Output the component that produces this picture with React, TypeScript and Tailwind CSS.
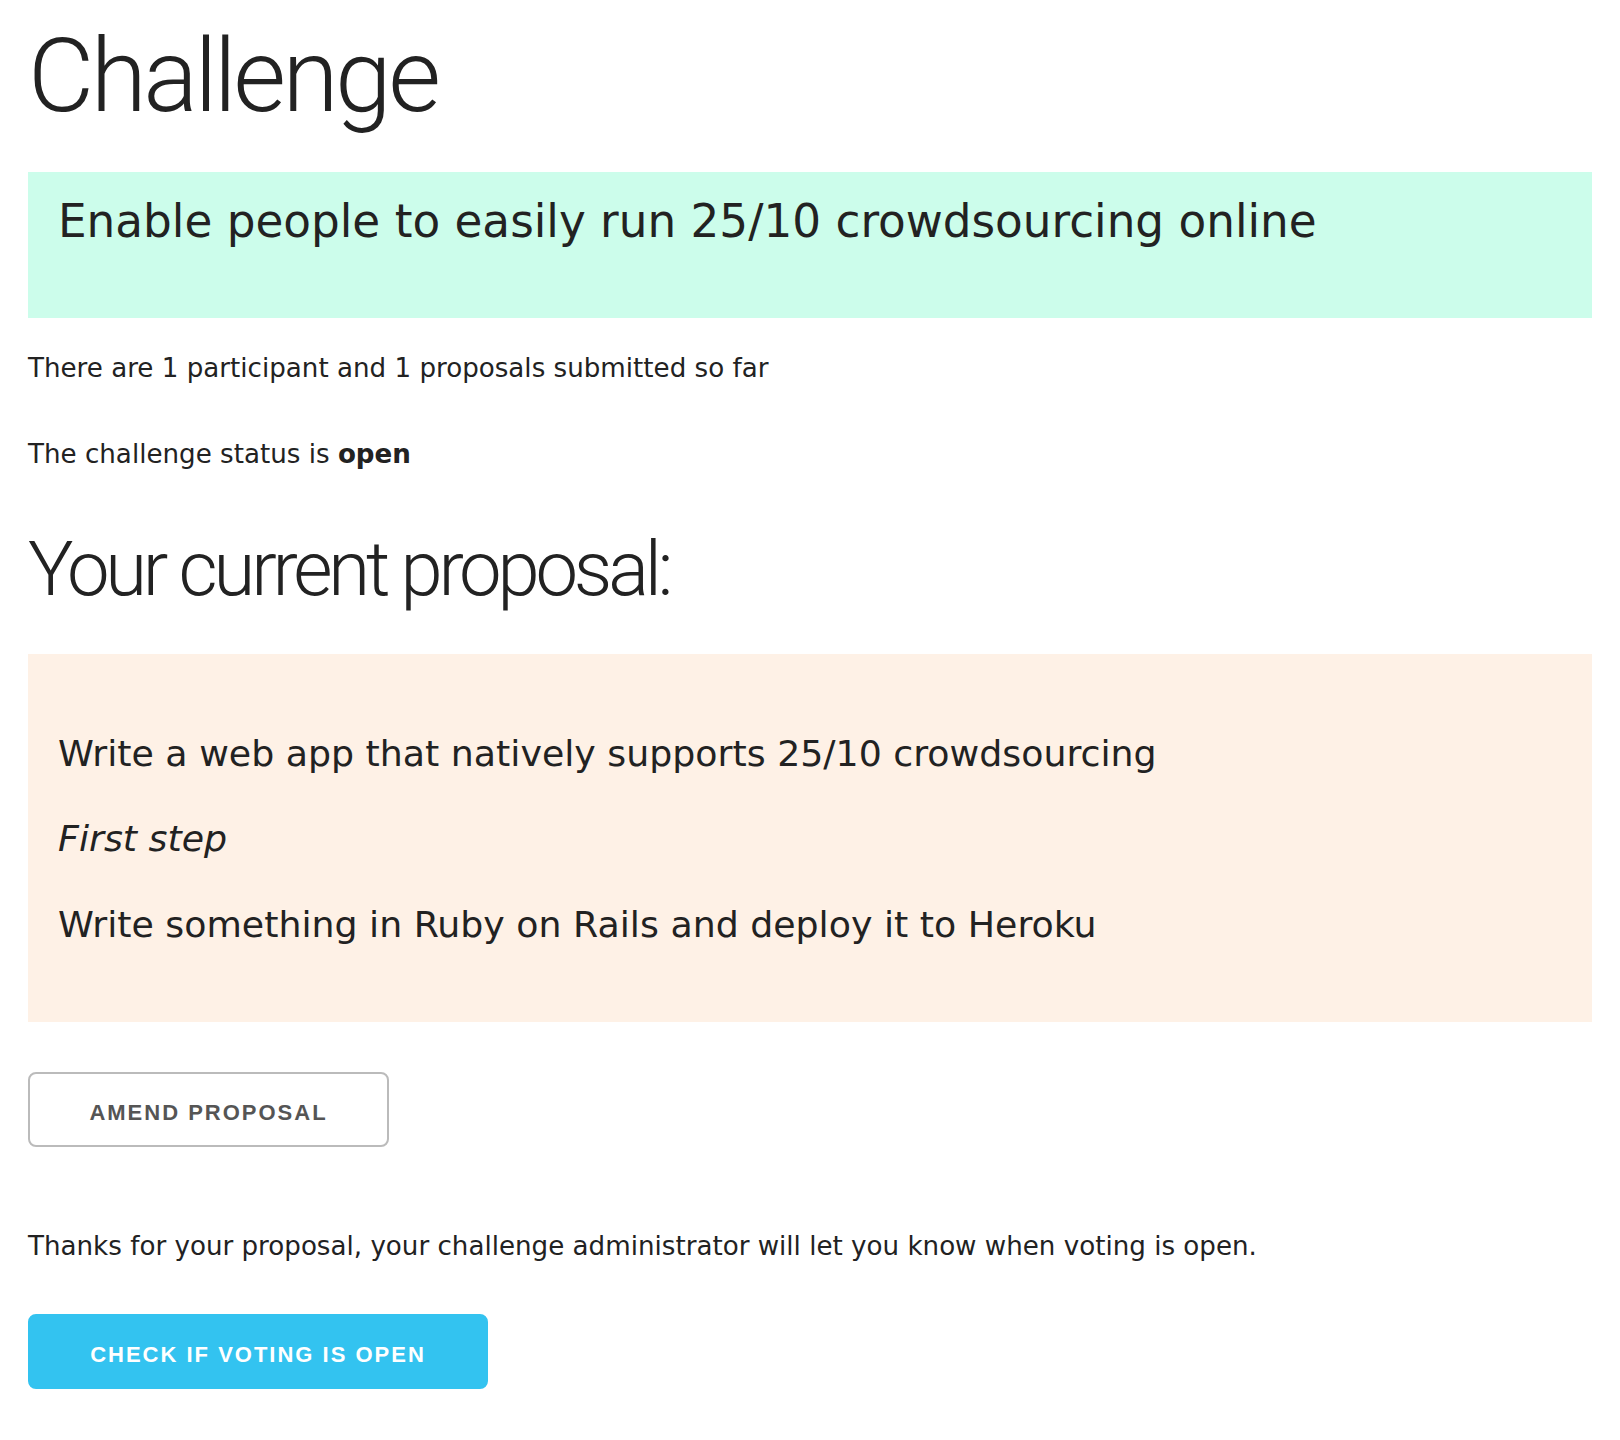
import React from 'react';

const heading = "font-['Roboto','Liberation_Sans',Arial,sans-serif] font-light text-[#222]";
const body = "font-['DejaVu_Sans','Verdana',sans-serif] text-[#222]";
const btn =
  "flex h-[75px] items-center justify-center rounded-[8px] border-2 pt-[5px] font-['Liberation_Sans',Arial,sans-serif] text-[22px] font-bold uppercase tracking-[2px]";

export default function App() {
  return (
    <div className="min-h-screen bg-white px-[28px] pb-[40px]">
      <h1 className={`${heading} pt-[15px] text-[102px] leading-[122px] tracking-[-3.5px]`}>Challenge</h1>

      {/* challenge statement */}
      <div className="mt-[35px] bg-[#ccfdeb] pl-[30px] pr-[30px] pt-[16px] pb-[62px]">
        <h2 className={`${body} text-[45.3px] leading-[68px]`}>Enable people to easily run 25/10 crowdsourcing online</h2>
      </div>

      <p className={`${body} mt-[31px] text-[26.15px] leading-[39px]`}>
        There are 1 participant and 1 proposals submitted so far
      </p>
      <p className={`${body} mt-[47px] text-[26.15px] leading-[39px]`}>
        The challenge status is <strong className="font-bold">open</strong>
      </p>

      <h2 className={`${heading} mt-[50px] text-[76px] leading-[91px] tracking-[-4.2px]`}>Your current proposal:</h2>

      {/* proposal body */}
      <div className={`${body} mt-[39px] bg-[#fef1e6] px-[30px] pt-[73px] pb-[70px] text-[36.3px] leading-[54px]`}>
        <p>Write a web app that natively supports 25/10 crowdsourcing</p>
        <p className="mt-[31px] italic">First step</p>
        <p className="mt-[32px]">Write something in Ruby on Rails and deploy it to Heroku</p>
      </div>

      <button className={`${btn} mt-[50px] w-[361px] border-[#bbb] bg-white text-[#555]`}>Amend proposal</button>

      <p className={`${body} mt-[80px] text-[26.15px] leading-[39px]`}>
        Thanks for your proposal, your challenge administrator will let you know when voting is open.
      </p>

      <button className={`${btn} mt-[48px] w-[460px] border-[#33c3f0] bg-[#33c3f0] text-white`}>Check if voting is open</button>
    </div>
  );
}
